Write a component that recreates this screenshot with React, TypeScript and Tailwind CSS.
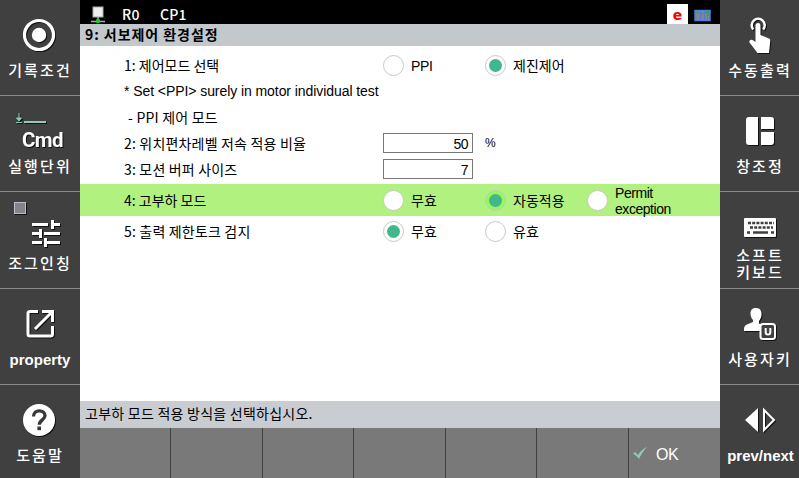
import type { ReactNode } from 'react';

const korean = "font-['Noto_Sans_CJK_KR',sans-serif]";
const latin = "font-['Liberation_Sans',sans-serif]";

function SideButton({ label, icon, tall = false, last = false, labelClass = '' }: {
  label: ReactNode; icon: ReactNode; tall?: boolean; last?: boolean; labelClass?: string;
}) {
  return (
    <div className={`flex w-20 flex-col items-center ${last ? 'h-[93px]' : tall ? 'h-[97px] border-b border-[#8a8a8a]' : 'h-24 border-b border-[#8a8a8a]'}`}>
      <svg width="80" height="60" viewBox="0 0 80 60" className="shrink-0 drop-shadow-[1px_1px_0_#111]">{icon}</svg>
      <div className={`whitespace-nowrap text-center text-white ${labelClass || `${korean} text-[15px] font-medium leading-5 tracking-[2.1px] ${tall ? 'mt-px' : ''}`}`}>{label}</div>
    </div>
  );
}

const latinLabel = "font-['Liberation_Sans',sans-serif] text-[15px] font-bold leading-[22px]";

function Radio({ on = false, active = false, children, className = '' }: {
  on?: boolean; active?: boolean; children: ReactNode; className?: string;
}) {
  return (
    <div className="flex w-[102px] shrink-0 items-center">
      <span className={`mr-[7px] flex size-[21px] shrink-0 items-center justify-center rounded-full border border-[#c8c8c8] ${active ? 'bg-[#93fb55]' : 'bg-white'}`}>
        {on && <span className="size-[13px] rounded-full bg-[#43b78b]" />}
      </span>
      <span className={`whitespace-nowrap ${className}`}>{children}</span>
    </div>
  );
}

function Row({ label, labelClass = '', className = 'h-[26px]', children }: {
  label: string; labelClass?: string; className?: string; children?: ReactNode;
}) {
  return (
    <div className={`flex items-center pl-11 ${className}`}>
      <div className={`w-[259px] shrink-0 whitespace-nowrap ${labelClass}`}>{label}</div>
      {children}
    </div>
  );
}

function NumberBox({ value }: { value: string }) {
  return (
    <div className={`flex h-5 w-[90px] items-center justify-end border border-[#777] bg-white pr-1 pt-px text-sm tracking-[-0.5px] ${latin}`}>{value}</div>
  );
}

export default function App() {
  return (
    <div className="flex h-[478px] w-[799px] overflow-hidden bg-[#404040]">
      <aside className="w-20 shrink-0">
        <SideButton label="기록조건" icon={<>
          <circle cx="39" cy="35" r="14.5" fill="none" stroke="#fff" strokeWidth="3.2" />
          <circle cx="39" cy="35" r="7.2" fill="#fff" />
        </>} />
        <SideButton label="실행단위" icon={<>
          <path d="M19 17v7M16.5 22h5L19 25zM16 26.5h6" stroke="#8fcbb5" fill="#8fcbb5" />
          <path d="M24 26h22" stroke="#8fcbb5" strokeWidth="2" />
          <text x="22" y="51" fill="#fff" fontSize="20.5" fontWeight="700" fontFamily="Roboto, sans-serif" textLength="41.5">Cmd</text>
        </>} />
        <SideButton tall label="조그인칭" icon={<>
          <rect x="14.5" y="10.5" width="11" height="11" fill="#858389" stroke="#b4c0cb" />
          <path d="M32 32.5h16M52.5 28v9M52.5 32.5H60M32 41.5h8M40.5 37v9M44 41.5h16M32 50.5h10M45.5 46v9M45.5 50.5H60" stroke="#fff" strokeWidth="3" />
        </>} />
        <SideButton label="property" labelClass={latinLabel} icon={<>
          <path d="M38 22.5H30a2 2 0 0 0-2 2V45a2 2 0 0 0 2 2h20.5a2 2 0 0 0 2-2v-8" fill="none" stroke="#fff" strokeWidth="3" />
          <path d="M42 22.5h10.5V33M51.5 23.5 35 40" fill="none" stroke="#fff" strokeWidth="3" />
        </>} />
        <SideButton last label="도움말" icon={<>
          <circle cx="39" cy="35" r="16" fill="#fff" />
          <path d="M33.500 31.500c0-7.500 11.500-7.500 11.500-.7 0 4-5.700 4.200-5.700 9" fill="none" stroke="#383838" strokeWidth="3.3" />
          <rect x="37.4" y="41.500" width="3.6" height="3.7" fill="#383838" />
        </>} />
      </aside>

      <main className={`flex w-[640px] shrink-0 flex-col bg-white text-sm text-black ${korean}`}>
        <header className="flex h-6 items-end bg-black text-white">
          <svg width="42" height="24" viewBox="0 0 42 24" className="shrink-0">
            <rect x="13" y="7" width="10" height="10" fill="#eee" stroke="#aaa" />
            <path d="M18 17v3M11 21.5h14" stroke="#aaa" strokeWidth="1.5" />
            <circle cx="18" cy="21" r="2.2" fill="#0d2" />
          </svg>
          <span className="w-[38px] text-sm font-medium leading-[19px] tracking-[0.2px]">R0</span>
          <span className="text-sm font-medium leading-[19px] tracking-[0.2px]">CP1</span>
          <span className="ml-auto flex h-5 w-[21px] items-center justify-center bg-white pt-px font-['DejaVu_Sans',sans-serif] text-sm font-bold text-[#f00]">e</span>
          <svg width="32" height="24" viewBox="0 0 32 24" className="shrink-0">
            <rect x="7" y="10.5" width="15" height="10" fill="#7c8791" stroke="#527fdc" strokeWidth="1.5" />
            <path d="M12.500 11v9M16.500 11v9M19.500 11v9" stroke="#537bcc" />
            <path d="M9 12.500h2M13 13.500h2M17 12.500h4M19 15h2" stroke="#2a9c43" />
          </svg>
        </header>
        <div className="h-[22px] shrink-0 bg-[#c3c8cc] pl-[5px] text-sm font-bold leading-[21px] tracking-[0.95px]">9: 서보제어 환경설정</div>

        <section className="flex-1 pt-1.5">
          <Row label="1: 제어모드 선택">
            <Radio className={`pt-px text-sm tracking-[-0.4px] ${latin}`}>PPI</Radio>
            <Radio on>제진제어</Radio>
          </Row>
          <Row label="* Set <PPI> surely in motor individual test" labelClass={`tracking-[-0.07px] ${latin}`} />
          <Row label="- PPI 제어 모드" labelClass="pl-1 tracking-[0.2px] -mt-px" />
          <Row label="2: 위치편차레벨 저속 적용 비율" labelClass="tracking-[0.18px] -mt-px">
            <NumberBox value="50" />
            <span className={`ml-3 text-xs ${latin}`}>%</span>
          </Row>
          <Row label="3: 모션 버퍼 사이즈" labelClass="tracking-[0.18px] -mt-px"><NumberBox value="7" /></Row>
          <Row label="4: 고부하 모드" className="mt-0.5 h-8 bg-[#b0f17f]">
            <Radio>무효</Radio>
            <Radio on active>자동적용</Radio>
            <Radio className={`pt-px text-sm leading-4 tracking-[-0.45px] ${latin}`}>Permit<br />exception</Radio>
          </Row>
          <Row label="5: 출력 제한토크 검지" labelClass="tracking-[0.18px] -mt-px" className="mt-0.5 h-[26px]">
            <Radio on>무효</Radio>
            <Radio>유효</Radio>
          </Row>
        </section>

        <div className="h-[27px] shrink-0 bg-[#c9cdd2] pl-[5px] text-sm leading-6 tracking-[0.25px]">고부하 모드 적용 방식을 선택하십시오.</div>
        <footer className="flex h-[50px] shrink-0 bg-[#797979]">
          <div className="w-[91px] border-r border-[#404040]" />
          <div className="w-[92px] border-r border-[#404040]" />
          <div className="w-[91px] border-r border-[#404040]" />
          <div className="w-[92px] border-r border-[#404040]" />
          <div className="w-[91px] border-r border-[#404040]" />
          <div className="w-[92px] border-r border-[#404040]" />
          <div className={`flex flex-1 items-center pl-1 text-white ${latin}`}>
            <svg width="15" height="14" viewBox="0 0 15 14"><path d="M0 7.500 2 6l3 3C7.500 5 10.500 2.500 14 1 10.500 4.500 8 8.500 6 13 4.500 11 2.500 9 0 7.500Z" fill="#8fcbb5" /></svg>
            <span className="ml-2 mt-1 text-base tracking-[-0.4px]">OK</span>
          </div>
        </footer>
      </main>

      <aside className="w-[79px] shrink-0 overflow-hidden">
        <SideButton label="수동출력" icon={<>
          <path d="M33.200 29.500a6.500 6.500 0 1 1 10 0" fill="none" stroke="#fff" strokeWidth="2.5" />
          <path d="M35.500 25.500a2.500 2.500 0 0 1 5 0V35l8.500 3.500c1 .5 1.500 1.500 1.300 2.500L49 53H37.500L29.500 42.500c-.8-2 1.500-3.500 3-2.500l3 2Z" fill="#fff" />
        </>} />
        <SideButton label="창조정" icon={<>
          <path d="M29 21h9v28h-9a3 3 0 0 1-3-3V24a3 3 0 0 1 3-3ZM41 21h10a3 3 0 0 1 3 3v9H41ZM41 36h13v10a3 3 0 0 1-3 3H41Z" fill="#fff" />
        </>} />
        <SideButton tall label={<>소프트<br />키보드</>} labelClass={`${korean} -mt-[6px] text-[15px] font-medium leading-[17px] tracking-[2.1px]`} icon={<>
          <rect x="24" y="26" width="32" height="19" rx="1" fill="#fff" />
          <path d="M28 31h26M30 35.500h23" stroke="#404040" strokeWidth="2.5" strokeDasharray="3 1.2" />
          <path d="M27 40.500h3M33 40.500h15M51 40.500h3" stroke="#404040" strokeWidth="2.5" />
        </>} />
        <SideButton label="사용자키" icon={<>
          <path d="M36 19c4.500 0 6 3.500 5.500 7-.3 3-1.500 5-2.500 6v2.500l5 2.500v5H24v-2c0-2.500 1-3.500 3-4.500l6-2.500v-2c-1.500-1.500-2.500-4-2.500-7 0-3 2-5 5.500-5Z" fill="#fff" />
          <rect x="40.500" y="35" width="14.500" height="15" rx="2.5" fill="#404040" stroke="#fff" strokeWidth="2" />
          <path d="M45.700 39v4.500c0 2.700 4.600 2.700 4.600 0V39" fill="none" stroke="#fff" strokeWidth="2" />
        </>} />
        <SideButton last label="prev/next" labelClass={`${latinLabel} pl-px`} icon={<>
          <path d="M38 23v24L25 35Z" fill="#fff" />
          <path d="M44 25v20l10-10Z" fill="none" stroke="#fff" strokeWidth="2" />
        </>} />
      </aside>
    </div>
  );
}
